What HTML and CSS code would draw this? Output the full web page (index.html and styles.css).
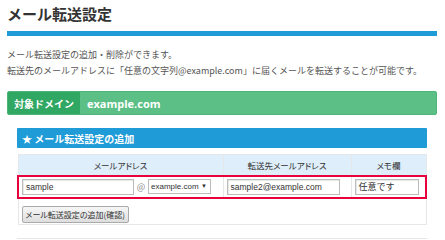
FILE: index.html
```html
<!DOCTYPE html>
<html lang="ja">
<head>
<meta charset="utf-8">
<link rel="stylesheet" href="styles.css">
</head>
<body>
<div class="page">
  <h1 class="title">メール転送設定</h1>
  <div class="title-bar"></div>
  <p class="desc">メール転送設定の追加・削除ができます。<br>転送先のメールアドレスに「任意の文字列@example.com」に届くメールを転送することが可能です。</p>
  <div class="domain">
    <span class="domain-label">対象ドメイン</span>
    <span class="domain-value">example.com</span>
  </div>
  <div class="section">
    <div class="section-head">★ メール転送設定の追加</div>
    <table class="tbl">
      <tr class="head-row">
        <th class="c1">メールアドレス</th>
        <th class="c2">転送先メールアドレス</th>
        <th class="c3">メモ欄</th>
      </tr>
      <tr class="input-row">
        <td class="c1"><span class="inp inp-local">sample</span><span class="at">@</span><span class="sel"><span>example.com</span><span class="arrow">▼</span></span></td>
        <td class="c2"><span class="inp inp-dest">sample2@example.com</span></td>
        <td class="c3"><span class="inp inp-memo">任意です</span></td>
      </tr>
      <tr class="btn-row">
        <td colspan="3"><span class="btn">メール転送設定の追加(確認)</span></td>
      </tr>
    </table>
    <div class="next-line"></div>
  </div>
</div>
</body>
</html>
```

FILE: styles.css
```css
* { box-sizing: border-box; }
html, body { margin: 0; padding: 0; background: #fff; }
body { font-family: "Noto Sans CJK JP", "Noto Sans", sans-serif; color: #333; }
.page { padding: 0 8px 0 7px; width: 445px; }
.title { margin: 0; padding-top: 3px; font-size: 15px; line-height: 22px; font-weight: bold; color: #333; }
.title-bar { margin-top: 6px; height: 5px; background: #1f9bd7; }
.desc { margin: 11px 0 0 0; font-size: 9px; line-height: 16px; color: #555; }
.domain { margin-top: 12px; display: flex; height: 24px; background: #5bbf86; border: 1px solid #4fb47a; border-radius: 2px; overflow: hidden; }
.domain-label { width: 72px; background: #30a763; color: #fff; font-size: 10px; font-weight: bold; display: flex; align-items: center; justify-content: center; }
.domain-value { color: #fff; font-weight: bold; font-size: 11px; font-family: "Open Sans", "Noto Sans", sans-serif; display: flex; align-items: center; padding-left: 7px; }
.section { margin: 13px 10px 0 10px; }
.section-head { background: #1f9bd7; color: #fff; height: 20px; font-size: 10px; font-weight: bold; display: flex; align-items: center; padding-left: 5px; border-radius: 1px; }
.tbl { margin-top: 6px; width: 100%; border-collapse: collapse; font-size: 9px; }
.tbl th, .tbl td { border: 1px solid #e4e8ea; padding: 0; }
.head-row th { background: #deeefa; height: 21px; font-weight: normal; color: #333; font-size: 8.5px; font-feature-settings: "palt"; }
.c1 { width: 205px; }
.c2 { width: 128px; }
.input-row td { height: 22px; border-top: 2px solid #e8003d; border-bottom: 2px solid #e8003d; padding-left: 3px; white-space: nowrap; }
.input-row td.c1 { border-left: 2px solid #e8003d; }
.input-row td.c3 { border-right: 2px solid #e8003d; padding-left: 3px; }
.inp { display: inline-block; vertical-align: middle; height: 16px; border: 1px solid #bbb; box-shadow: inset 1px 1px 1px #e6e6e6; background: #fff; font-size: 8.5px; line-height: 14px; padding-left: 3px; color: #333; font-family: "Liberation Sans", Arial, "Noto Sans CJK JP", sans-serif; }
.inp-local { width: 112px; }
.inp-dest { width: 113px; }
.inp-memo { width: 64px; font-size: 9px; font-family: "Noto Sans CJK JP", sans-serif; }
.at { display: inline-block; vertical-align: middle; width: 14px; text-align: center; color: #888; font-size: 9px; }
.sel { display: inline-flex; align-items: center; justify-content: space-between; vertical-align: middle; width: 63px; height: 15px; border: 1px solid #bbb; font-size: 8px; line-height: 13px; padding: 0 3px 0 2px; color: #333; font-family: "Liberation Sans", Arial, sans-serif; white-space: nowrap; }
.arrow { font-size: 6px; margin-left: 2px; }
.btn-row td { height: 27px; padding: 7px 0 1px 3px; vertical-align: top; border-top: none; }
.btn { display: inline-block; height: 17px; padding: 0 3px; border: 1px solid #aaa; border-radius: 2px; background: linear-gradient(#f6f6f6, #dedede); font-size: 8px; line-height: 15px; color: #333; font-feature-settings: "palt"; }
.next-line { margin-top: 13px; border-top: 1px solid #e4e8ea; }
```
